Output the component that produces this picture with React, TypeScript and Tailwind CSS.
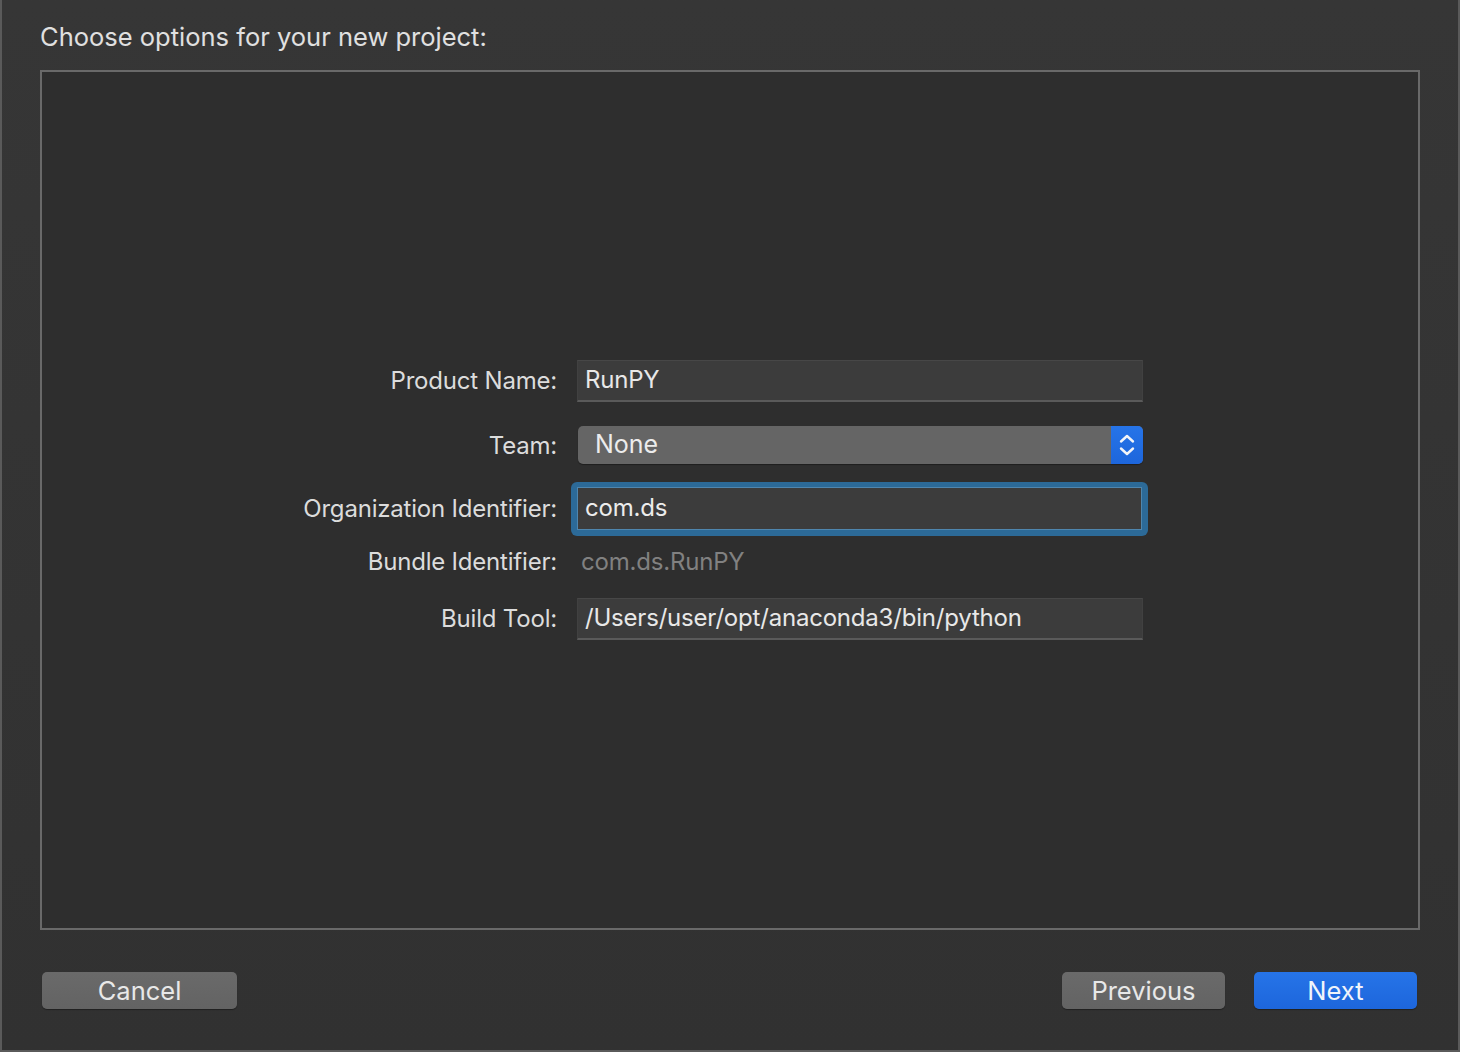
import React from "react";

const font = { fontFamily: "Inter, 'Noto Sans', 'Liberation Sans', sans-serif" };

function Label({ children }: { children: React.ReactNode }) {
  return (
    <div className="w-[315px] shrink-0 text-right text-[24px] leading-none text-[#dcdcdc] tracking-[-0.2px]">
      {children}
    </div>
  );
}

function TextField({ value }: { value: string }) {
  return (
    <div className="ml-[6px] w-[566px] h-[42px] bg-[#3c3c3c] border-t border-t-[#474747] border-b-2 border-b-[#5a5a5a] border-x border-x-[#414141] flex items-center pl-[7px] text-[24px] tracking-[-0.2px] text-[#e8e8e8]">
      {value}
    </div>
  );
}

export default function App() {
  return (
    <div
      style={font}
      className="w-[1460px] h-[1052px] bg-gradient-to-b from-[#363636] to-[#313131] border-l-2 border-r-2 border-b-2 border-[#5a5a5a] flex flex-col pl-[38px] overflow-hidden"
    >
      <div className="pt-[21px] h-[53px] leading-[32px] text-[25.5px] text-[#e0e0e0]">
        Choose options for your new project:
      </div>
      <div className="mt-[17px] w-[1380px] h-[860px] border-2 border-[#696969] bg-[#2e2e2e] flex flex-col justify-center pl-[200px] pb-[1px]">
        {/* Product Name */}
        <div className="flex items-center h-[42px]">
          <Label>Product Name:</Label>
          <div className="ml-[14px] w-[577px]">
            <TextField value="RunPY" />
          </div>
        </div>
        {/* Team */}
        <div className="flex items-center h-[42px] mt-[22px]">
          <div className="pt-[3px]">
            <Label>Team:</Label>
          </div>
          <div className="ml-[14px] w-[577px]">
            <div className="ml-[7px] w-[565px] h-[38px] rounded-[5px] bg-[#656565] flex items-stretch overflow-hidden shadow-[0_1px_1px_rgba(0,0,0,0.35)]">
              <div className="flex-1 flex items-center pl-[17px] text-[25px] text-[#ececec]">None</div>
              <div className="w-[32px] bg-gradient-to-b from-[#2674e8] to-[#1d66dc] flex items-center justify-center">
                <svg width="18" height="26" viewBox="0 0 18 26" fill="none">
                  <path d="M3 9.5 L9 4 L15 9.5" stroke="#f2f4f8" strokeWidth="2.4" strokeLinecap="round" strokeLinejoin="round" />
                  <path d="M3 16.5 L9 22 L15 16.5" stroke="#f2f4f8" strokeWidth="2.4" strokeLinecap="round" strokeLinejoin="round" />
                </svg>
              </div>
            </div>
          </div>
        </div>
        {/* Organization Identifier */}
        <div className="flex items-center h-[54px] mt-[16px]">
          <Label>Organization Identifier:</Label>
          <div className="ml-[14px] w-[577px] h-[54px] rounded-[6px] bg-[#2c6a98] pt-[5px] pb-[6px] px-[6px]">
            <div className="w-full h-full bg-[#3c3c3c] border border-[#4f86ae] flex items-center pl-[7px] text-[24px] tracking-[-0.2px] text-[#ececec]">
              com.ds
            </div>
          </div>
        </div>
        {/* Bundle Identifier */}
        <div className="flex items-center h-[44px] mt-[4px]">
          <Label>Bundle Identifier:</Label>
          <div className="ml-[14px] w-[577px] pl-[10px] text-[24px] tracking-[-0.2px] text-[#818181]">com.ds.RunPY</div>
        </div>
        {/* Build Tool */}
        <div className="flex items-center h-[42px] mt-[14px]">
          <Label>Build Tool:</Label>
          <div className="ml-[14px] w-[577px]">
            <TextField value="/Users/user/opt/anaconda3/bin/python" />
          </div>
        </div>
      </div>
      <div className="mt-[42px] w-[1380px] flex items-center pl-[2px] pr-[3px]">
        <button className="w-[195px] h-[37px] rounded-[5px] bg-gradient-to-b from-[#6a6a6a] to-[#636363] text-[25.5px] text-[#e8e8e8] leading-none shadow-[0_1px_1px_rgba(0,0,0,0.35)]">
          Cancel
        </button>
        <div className="flex-1" />
        <button className="w-[163px] h-[37px] rounded-[5px] bg-gradient-to-b from-[#6a6a6a] to-[#636363] text-[25.5px] text-[#e8e8e8] leading-none shadow-[0_1px_1px_rgba(0,0,0,0.35)]">
          Previous
        </button>
        <button className="ml-[29px] w-[163px] h-[37px] rounded-[5px] bg-gradient-to-b from-[#2674e8] to-[#1d66dc] text-[25.5px] text-[#f0f4fa] leading-none shadow-[0_1px_1px_rgba(0,0,0,0.35)]">
          Next
        </button>
      </div>
    </div>
  );
}
